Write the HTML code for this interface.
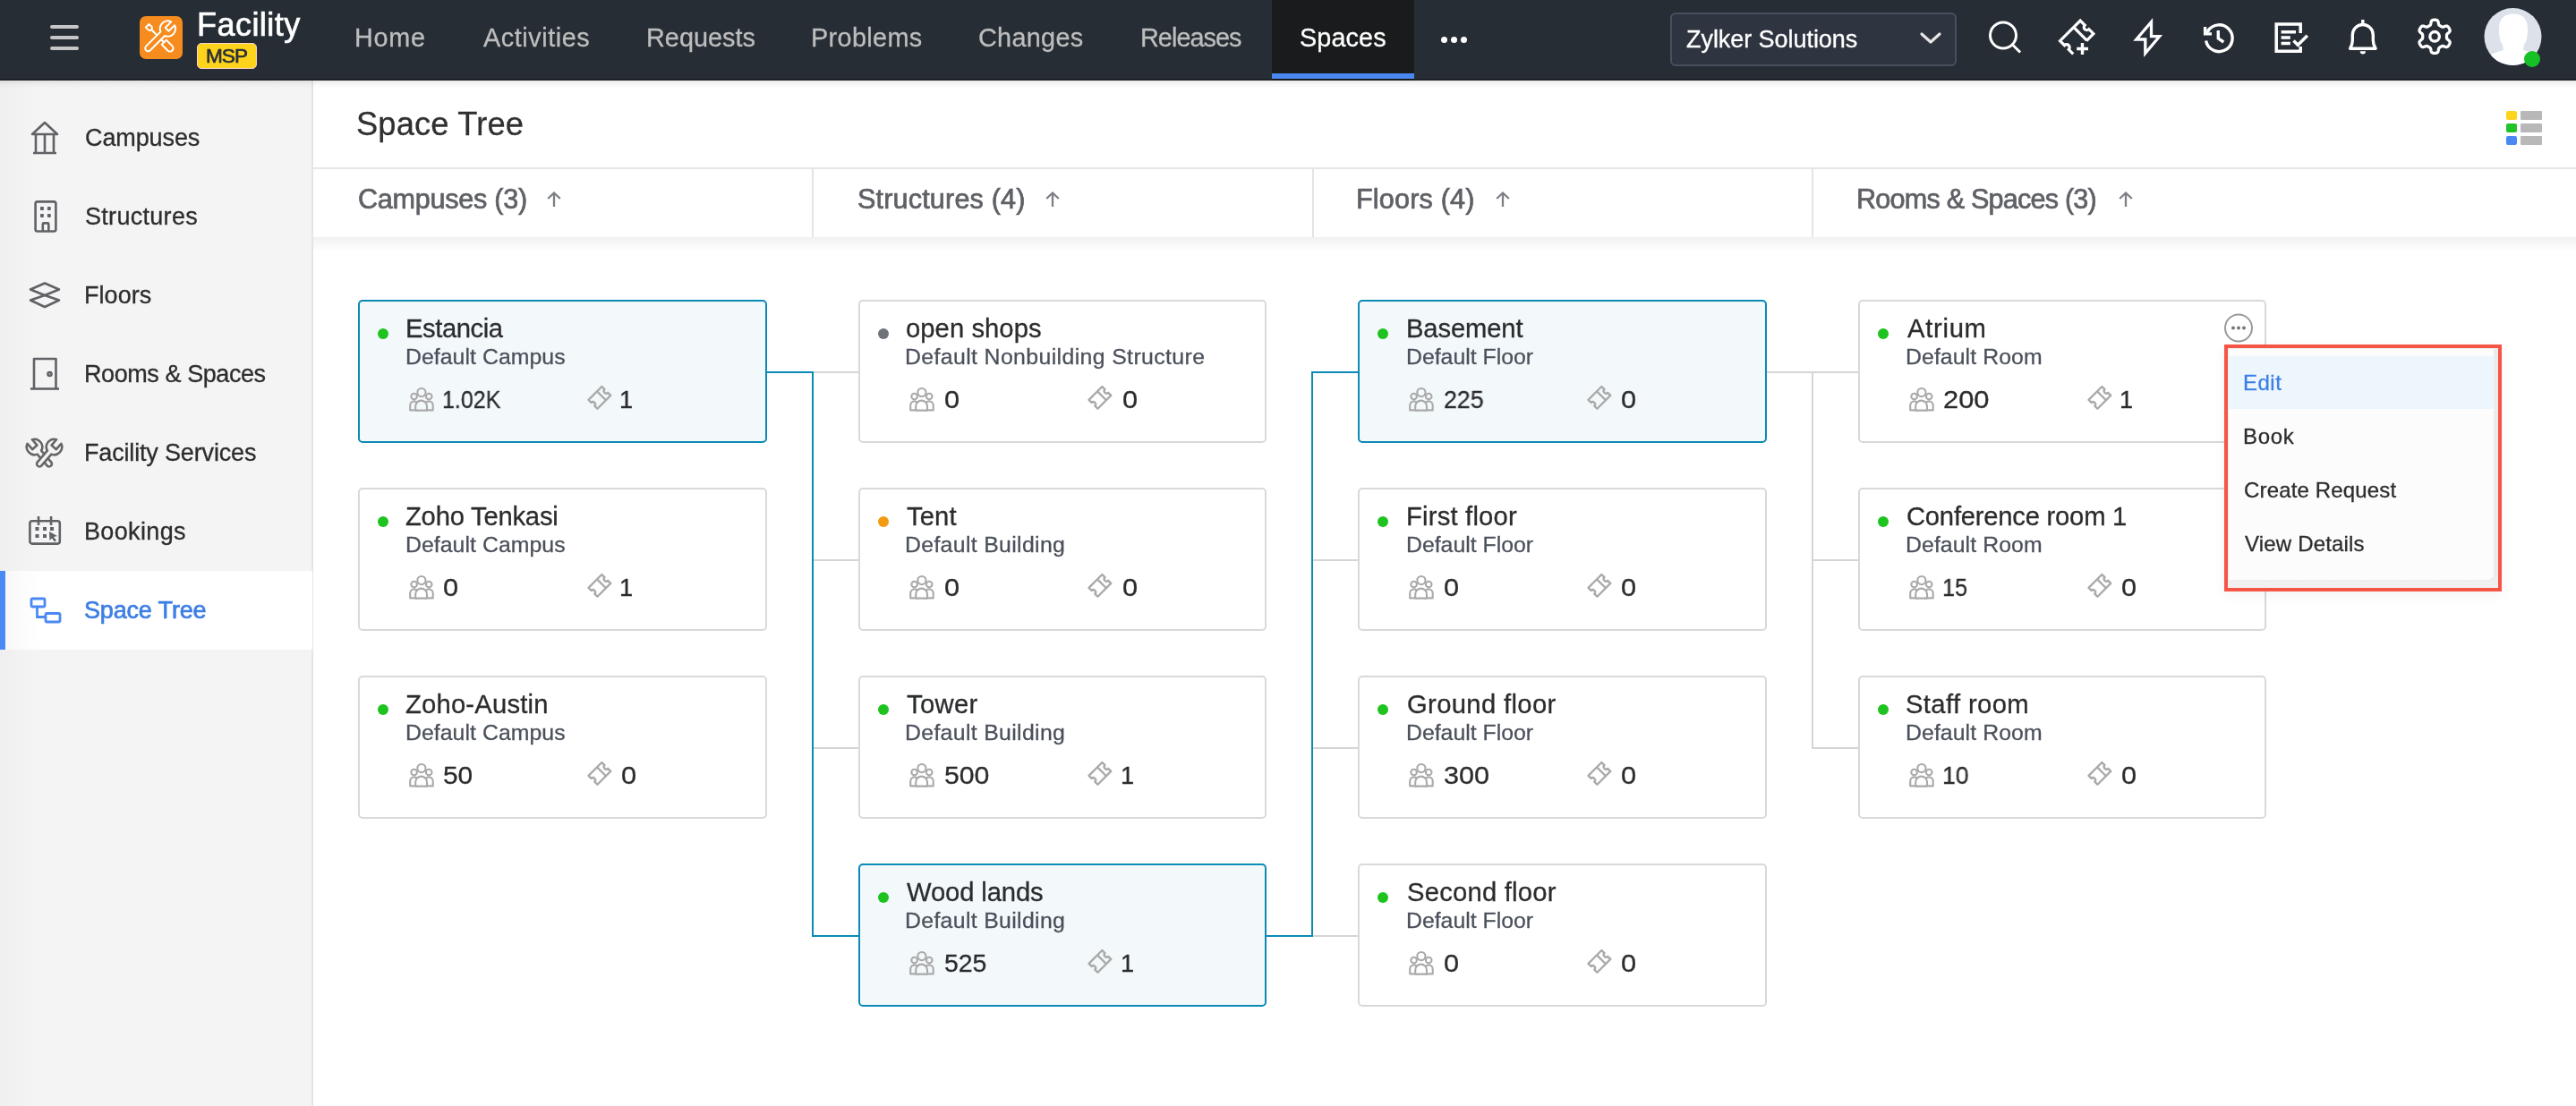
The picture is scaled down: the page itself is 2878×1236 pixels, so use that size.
<!DOCTYPE html>
<html><head><meta charset="utf-8"><style>
html,body{margin:0;padding:0;width:2878px;height:1236px;overflow:hidden;background:#fff;font-family:"Liberation Sans",sans-serif}
.a{position:absolute;display:block}
.t{position:absolute;white-space:nowrap;line-height:1;will-change:transform;-webkit-text-stroke:0.3px currentColor}
</style></head><body>
<div class="a" style="left:0px;top:0px;width:2878px;height:90px;background:#262d35"></div>
<div class="a" style="left:0px;top:88px;width:2878px;height:2px;background:#1e232a"></div>
<div class="a" style="left:56px;top:28px;width:32px;height:4px;background:#c6c6c6;border-radius:2px"></div>
<div class="a" style="left:56px;top:40px;width:32px;height:4px;background:#c6c6c6;border-radius:2px"></div>
<div class="a" style="left:56px;top:52px;width:32px;height:4px;background:#c6c6c6;border-radius:2px"></div>
<svg class="a" style="left:156px;top:18px" width="48" height="48" viewBox="0 0 48 48"><rect x="0" y="0" width="48" height="48" rx="7" fill="#f68b1e"/>
<g transform="translate(21.75 23.75) rotate(-45)" fill="#f68b1e" stroke="#fff" stroke-width="2" stroke-linejoin="round">
<path d="M0 -13 V8" stroke-width="2.2"/>
<path d="M-2.6 -18.5 L2.6 -18.5 L2.6 -14 L1.3 -12.3 L-1.3 -12.3 L-2.6 -14 Z" stroke-width="1.9"/>
<path d="M-3.6 7.8 L3.6 7.8 L3.6 17.2 A3.6 3.6 0 0 1 -3.6 17.2 Z"/>
<path d="M21.82 -2.7 L12.5 -2.7 L12.5 2.7 L21.82 2.7 A8.6 8.6 0 0 1 5.71 3.3 L-17.3 3.3 A3.3 3.3 0 0 1 -17.3 -3.3 L5.71 -3.3 A8.6 8.6 0 0 1 21.82 -2.7 Z"/>
</g></svg>
<div id="t0" class="t" style="left:220.00px;top:10.13px;font-size:36px;color:#ffffff;font-weight:400;letter-spacing:0.462px;-webkit-text-stroke:0.7px #ffffff">Facility</div>
<div class="a" style="left:220px;top:48px;width:67px;height:29px;background:#fdd31b;border-radius:5px;border:1.3px solid #f7d5cb;box-sizing:border-box"></div>
<div id="t1" class="t" style="left:230.00px;top:51.67px;font-size:22.6px;color:#2b2f36;font-weight:400;letter-spacing:-1.000px;-webkit-text-stroke:0.7px #2b2f36">MSP</div>
<div class="a" style="left:1421px;top:0px;width:159px;height:90px;background:#1a1b1c"></div>
<div class="a" style="left:1421px;top:82px;width:159px;height:6px;background:#4a88f0"></div>
<div id="t2" class="t" style="left:396.20px;top:28.22px;font-size:28.8px;color:#bdbdbd;font-weight:400;letter-spacing:0.739px;">Home</div>
<div id="t3" class="t" style="left:540.00px;top:28.22px;font-size:28.8px;color:#bdbdbd;font-weight:400;letter-spacing:0.556px;">Activities</div>
<div id="t4" class="t" style="left:722.00px;top:28.22px;font-size:28.8px;color:#bdbdbd;font-weight:400;letter-spacing:0.034px;">Requests</div>
<div id="t5" class="t" style="left:906.00px;top:28.22px;font-size:28.8px;color:#bdbdbd;font-weight:400;letter-spacing:0.358px;">Problems</div>
<div id="t6" class="t" style="left:1093.40px;top:28.22px;font-size:28.8px;color:#bdbdbd;font-weight:400;letter-spacing:0.319px;">Changes</div>
<div id="t7" class="t" style="left:1274.40px;top:28.22px;font-size:28.8px;color:#bdbdbd;font-weight:400;letter-spacing:-0.933px;">Releases</div>
<div id="t8" class="t" style="left:1452.00px;top:28.22px;font-size:28.8px;color:#ffffff;font-weight:400;letter-spacing:0.100px;">Spaces</div>
<div class="a" style="left:1610.2px;top:41px;width:7px;height:7px;background:#ffffff;border-radius:50%"></div>
<div class="a" style="left:1621.1px;top:41px;width:7px;height:7px;background:#ffffff;border-radius:50%"></div>
<div class="a" style="left:1631.9px;top:41px;width:7px;height:7px;background:#ffffff;border-radius:50%"></div>
<div class="a" style="left:1866px;top:14px;width:320px;height:60px;background:#2e3540;border:2px solid #485060;border-radius:6px;box-sizing:border-box"></div>
<div id="t9" class="t" style="left:1884.00px;top:30.94px;font-size:27px;color:#ffffff;font-weight:400;letter-spacing:-0.054px;">Zylker Solutions</div>
<svg class="a" style="left:2144px;top:35px" width="26" height="16" viewBox="0 0 26 16"><path d="M3 3 L13 12 L23 3" fill="none" stroke="#e6e6e6" stroke-width="3.2" stroke-linecap="round" stroke-linejoin="round"/></svg>
<svg class="a" style="left:2218px;top:18px" width="44" height="46" viewBox="0 0 44 46"><g fill="none" stroke="#ffffff" stroke-width="3" stroke-linecap="square" stroke-linejoin="miter"><circle cx="20" cy="21.5" r="14.5"/><path d="M30.5 32 L38 39.5"/></g></svg>
<svg class="a" style="left:2290px;top:15px" width="60" height="55" viewBox="0 0 60 55"><g fill="none" stroke="#fff" stroke-width="3.2" stroke-linejoin="miter"><g transform="translate(30.2 26.7) rotate(-45)"><path d="M-16 10.4 L-16 3.3 A3.3 3.3 0 0 0 -16 -3.3 L-16 -10.4 L16 -10.4 L16 -3.3 A3.3 3.3 0 0 0 16 3.3 L16 10.4 L5 10.4"/><path d="M5.5 -10.4 V10.4"/></g><path d="M30.2 39.5 H43 M36.5 33 V46" stroke-width="3.4"/></g></svg>
<svg class="a" style="left:2370px;top:15px" width="60" height="55" viewBox="0 0 60 55"><path d="M33.5 9.5 L16.8 29 H26.8 V44.5 L42.6 25.7 H33.5 Z" fill="none" stroke="#fff" stroke-width="3.3" stroke-linejoin="miter" stroke-miterlimit="10"/></svg>
<svg class="a" style="left:2450px;top:15px" width="60" height="55" viewBox="0 0 60 55"><g fill="none" stroke="#fff" stroke-width="3.4"><path d="M14.6 30.5 A14.9 14.9 0 1 0 16.8 19.5"/><path d="M13.6 15 V22.9 H21"/><path d="M13.6 22.9 L18 18.5"/><path d="M28.3 19 V27.8 L34.3 32"/></g></svg>
<svg class="a" style="left:2530px;top:15px" width="60" height="55" viewBox="0 0 60 55"><g fill="none" stroke="#fff" stroke-width="3.5" stroke-linecap="butt"><path d="M40.2 21.9 V12 H13.2 V42.2 H40.2 V37"/><path d="M18.6 20.8 H35 M18.6 27 H28.8 M18.6 33.5 H28.8"/><path d="M32.5 30.5 L37.3 35.3 L47.8 24.8"/></g></svg>
<svg class="a" style="left:2610px;top:15px" width="60" height="55" viewBox="0 0 60 55"><g fill="none" stroke="#fff" stroke-width="3.4" stroke-linejoin="round"><path d="M15.6 39.3 Q18.3 35 18.3 30 V24 A11.5 11.5 0 0 1 41.3 24 V30 Q41.3 35 44.1 39.3 Z"/><path d="M29.8 7 V12.5"/></g><path d="M26.7 42.3 H33 A3.15 3.15 0 0 1 26.7 42.3 Z" fill="#fff"/></svg>
<svg class="a" style="left:2690px;top:15px" width="60" height="55" viewBox="0 0 60 55"><g fill="none" stroke="#fff" stroke-width="3.3" stroke-linejoin="round"><path d="M43.50 25.80 L43.50 26.15 L43.50 26.50 L43.50 26.85 L43.51 27.21 L43.55 27.57 L43.64 27.94 L43.84 28.35 L44.21 28.80 L44.80 29.33 L45.55 29.94 L46.29 30.59 L46.82 31.23 L47.09 31.82 L47.18 32.36 L47.13 32.86 L47.02 33.33 L46.85 33.79 L46.66 34.24 L46.44 34.67 L46.21 35.10 L45.96 35.52 L45.69 35.92 L45.40 36.31 L45.08 36.68 L44.73 37.02 L44.32 37.31 L43.81 37.51 L43.16 37.56 L42.35 37.42 L41.41 37.11 L40.51 36.77 L39.75 36.52 L39.17 36.42 L38.73 36.45 L38.36 36.56 L38.02 36.71 L37.71 36.88 L37.41 37.05 L37.10 37.23 L36.80 37.40 L36.50 37.58 L36.19 37.75 L35.89 37.93 L35.58 38.12 L35.29 38.33 L35.01 38.60 L34.76 38.97 L34.56 39.52 L34.39 40.29 L34.24 41.25 L34.04 42.22 L33.75 42.99 L33.39 43.53 L32.96 43.87 L32.51 44.08 L32.04 44.22 L31.56 44.30 L31.07 44.36 L30.59 44.39 L30.10 44.40 L29.61 44.39 L29.13 44.36 L28.64 44.30 L28.16 44.22 L27.69 44.08 L27.24 43.87 L26.81 43.53 L26.45 42.99 L26.16 42.22 L25.96 41.25 L25.81 40.29 L25.64 39.52 L25.44 38.97 L25.19 38.60 L24.91 38.33 L24.62 38.12 L24.31 37.93 L24.01 37.75 L23.70 37.58 L23.40 37.40 L23.10 37.23 L22.79 37.05 L22.49 36.88 L22.18 36.71 L21.84 36.56 L21.47 36.45 L21.03 36.42 L20.45 36.52 L19.69 36.77 L18.79 37.11 L17.85 37.42 L17.04 37.56 L16.39 37.51 L15.88 37.31 L15.47 37.02 L15.12 36.68 L14.80 36.31 L14.51 35.92 L14.24 35.52 L13.99 35.10 L13.76 34.67 L13.54 34.24 L13.35 33.79 L13.18 33.33 L13.07 32.86 L13.02 32.36 L13.11 31.82 L13.38 31.23 L13.91 30.59 L14.65 29.94 L15.40 29.33 L15.99 28.80 L16.36 28.35 L16.56 27.94 L16.65 27.57 L16.69 27.21 L16.70 26.85 L16.70 26.50 L16.70 26.15 L16.70 25.80 L16.70 25.45 L16.70 25.10 L16.70 24.75 L16.69 24.39 L16.65 24.03 L16.56 23.66 L16.36 23.25 L15.99 22.80 L15.40 22.27 L14.65 21.66 L13.91 21.01 L13.38 20.37 L13.11 19.78 L13.02 19.24 L13.07 18.74 L13.18 18.27 L13.35 17.81 L13.54 17.36 L13.76 16.93 L13.99 16.50 L14.24 16.08 L14.51 15.68 L14.80 15.29 L15.12 14.92 L15.47 14.58 L15.88 14.29 L16.39 14.09 L17.04 14.04 L17.85 14.18 L18.79 14.49 L19.69 14.83 L20.45 15.08 L21.03 15.18 L21.47 15.15 L21.84 15.04 L22.18 14.89 L22.49 14.72 L22.79 14.55 L23.10 14.37 L23.40 14.20 L23.70 14.02 L24.01 13.85 L24.31 13.67 L24.62 13.48 L24.91 13.27 L25.19 13.00 L25.44 12.63 L25.64 12.08 L25.81 11.31 L25.96 10.35 L26.16 9.38 L26.45 8.61 L26.81 8.07 L27.24 7.73 L27.69 7.52 L28.16 7.38 L28.64 7.30 L29.13 7.24 L29.61 7.21 L30.10 7.20 L30.59 7.21 L31.07 7.24 L31.56 7.30 L32.04 7.38 L32.51 7.52 L32.96 7.73 L33.39 8.07 L33.75 8.61 L34.04 9.38 L34.24 10.35 L34.39 11.31 L34.56 12.08 L34.76 12.63 L35.01 13.00 L35.29 13.27 L35.58 13.48 L35.89 13.67 L36.19 13.85 L36.50 14.02 L36.80 14.20 L37.10 14.37 L37.41 14.55 L37.71 14.72 L38.02 14.89 L38.36 15.04 L38.73 15.15 L39.17 15.18 L39.75 15.08 L40.51 14.83 L41.41 14.49 L42.35 14.18 L43.16 14.04 L43.81 14.09 L44.32 14.29 L44.73 14.58 L45.08 14.92 L45.40 15.29 L45.69 15.68 L45.96 16.08 L46.21 16.50 L46.44 16.93 L46.66 17.36 L46.85 17.81 L47.02 18.27 L47.13 18.74 L47.18 19.24 L47.09 19.78 L46.82 20.37 L46.29 21.01 L45.55 21.66 L44.80 22.27 L44.21 22.80 L43.84 23.25 L43.64 23.66 L43.55 24.03 L43.51 24.39 L43.50 24.75 L43.50 25.10 L43.50 25.45Z"/><circle cx="30.1" cy="25.8" r="5.3"/></g></svg>
<svg class="a" style="left:2775px;top:9px" width="66" height="68" viewBox="0 0 66 68"><defs><clipPath id="av"><circle cx="32.5" cy="32" r="32"/></clipPath></defs>
<circle cx="32.5" cy="32" r="32" fill="#dde2ea"/>
<g clip-path="url(#av)" fill="#ffffff"><path d="M17 23 C17 11 24 6.5 33 6.5 C42 6.5 49 11 49 23 C49 31 48 37 45 41 L44 47 C52 49 58 52 64 56 L64 70 L0 70 L0 56 C7 52 14 49 22 47 L21 41 C18 37 17 31 17 23 Z"/></g>
<circle cx="54" cy="57" r="9" fill="#15c125"/></svg>
<div class="a" style="left:0px;top:90px;width:349px;height:1146px;background:linear-gradient(to right,#efefef 0px,#f4f4f4 40px)"></div>
<div class="a" style="left:348px;top:90px;width:2px;height:1146px;background:#e4e4e4"></div>
<div class="a" style="left:0px;top:638px;width:349px;height:88px;background:linear-gradient(to right,#f6f6f6 6px,#fbfbfb 20px,#ffffff 46px)"></div>
<div class="a" style="left:0px;top:638px;width:6px;height:88px;background:#4a89f3"></div>
<div id="t10" class="t" style="left:95.40px;top:140.94px;font-size:27px;color:#2d2d2d;font-weight:400;letter-spacing:-0.109px;">Campuses</div>
<div id="t11" class="t" style="left:95.40px;top:228.94px;font-size:27px;color:#2d2d2d;font-weight:400;letter-spacing:0.298px;">Structures</div>
<div id="t12" class="t" style="left:94.20px;top:316.94px;font-size:27px;color:#2d2d2d;font-weight:400;letter-spacing:0.040px;">Floors</div>
<div id="t13" class="t" style="left:94.40px;top:404.94px;font-size:27px;color:#2d2d2d;font-weight:400;letter-spacing:-0.423px;">Rooms &amp; Spaces</div>
<div id="t14" class="t" style="left:94.40px;top:492.94px;font-size:27px;color:#2d2d2d;font-weight:400;letter-spacing:-0.165px;">Facility Services</div>
<div id="t15" class="t" style="left:94.40px;top:580.94px;font-size:27px;color:#2d2d2d;font-weight:400;letter-spacing:0.352px;">Bookings</div>
<div id="t16" class="t" style="left:94.00px;top:668.94px;font-size:27px;color:#3d7fe5;font-weight:400;letter-spacing:-0.167px;-webkit-text-stroke:0.7px #3d7fe5">Space Tree</div>
<svg class="a" style="left:30px;top:130px" width="40" height="48" viewBox="0 0 40 48"><g fill="none" stroke="#606266" stroke-width="2.6" stroke-linejoin="round"><path d="M6 20 L20 7 L34 20 Z"/><path d="M10 20 V40 M20 20 V40 M30 20 V40 M7 41 H33"/></g></svg>
<svg class="a" style="left:30px;top:218px" width="40" height="48" viewBox="0 0 40 48"><g fill="none" stroke="#606266" stroke-width="2.6" stroke-linejoin="round"><rect x="9.6" y="7.4" width="22.8" height="33.1" rx="2.2"/><path d="M17.8 40.5 V32.4 a1 1 0 0 1 1 -1 h4.5 a1 1 0 0 1 1 1 V40.5"/></g><g fill="#606266"><rect x="15" y="13.1" width="3.9" height="3.9" rx="0.8"/><rect x="22.9" y="13.1" width="3.9" height="3.9" rx="0.8"/><rect x="15" y="21" width="3.9" height="3.9" rx="0.8"/><rect x="22.9" y="21" width="3.9" height="3.9" rx="0.8"/></g></svg>
<svg class="a" style="left:28px;top:306px" width="44" height="44" viewBox="0 0 44 44"><g fill="none" stroke="#606266" stroke-width="2.6" stroke-linejoin="round"><path d="M22 10.5 L38 17.5 L22 24 L6 17.5 Z"/><path d="M22 24 L38 29.5 L22 37 L6 29.5 Z"/></g></svg>
<svg class="a" style="left:30px;top:394px" width="40" height="48" viewBox="0 0 40 48"><g fill="none" stroke="#606266" stroke-width="2.6" stroke-linejoin="round"><path d="M8 40 V7 H32.5 V40"/><path d="M4 40.5 H36"/><circle cx="25.5" cy="24" r="2"/></g></svg>
<svg class="a" style="left:22px;top:482px" width="56" height="48" viewBox="0 0 56 48"><g fill="#f4f4f4" stroke="#666666" stroke-width="2.6" stroke-linejoin="round"><path transform="translate(16.5 17.5) rotate(49)" d="M-7.97 -3.5 L0.5 -3.5 L0.5 3.5 L-7.97 3.5 A8.7 8.7 0 0 0 8.17 3 L25 3 A3 3 0 0 0 25 -3 L8.17 -3 A8.7 8.7 0 0 0 -7.97 -3.5 Z"/><path transform="translate(38.5 17.5) scale(-1 1) rotate(49)" d="M-7.97 -3.5 L0.5 -3.5 L0.5 3.5 L-7.97 3.5 A8.7 8.7 0 0 0 8.17 3 L25 3 A3 3 0 0 0 25 -3 L8.17 -3 A8.7 8.7 0 0 0 -7.97 -3.5 Z"/></g></svg>
<svg class="a" style="left:28px;top:572px" width="44" height="42" viewBox="0 0 44 42"><g fill="none" stroke="#606266" stroke-width="2.6" stroke-linejoin="round"><rect x="5.4" y="10.3" width="33.4" height="25.3" rx="2.5"/><path d="M15.05 5 V14.9 M29.07 5 V14.9"/></g><g fill="#606266"><rect x="11.5" y="17" width="4" height="4"/><rect x="20" y="17" width="4" height="4"/><rect x="28" y="17" width="4" height="4"/><rect x="11.5" y="25" width="4" height="4"/><rect x="20" y="25" width="4" height="4"/><path d="M27 22 L36 27 L32 28 L35 32 L33 33.5 L30 29.5 L27.5 32 Z"/></g></svg>
<svg class="a" style="left:28px;top:662px" width="44" height="40" viewBox="0 0 44 40"><g fill="none" stroke="#4a89f3" stroke-width="2.8"><rect x="7" y="7" width="15" height="9" rx="1.5"/><rect x="23" y="23.5" width="16" height="9.5" rx="1.5"/><path d="M13.5 16 V27.5 H23"/></g></svg>
<div id="t17" class="t" style="left:398.40px;top:120.67px;font-size:36.3px;color:#303030;font-weight:400;letter-spacing:0.150px;">Space Tree</div>
<div class="a" style="left:2800px;top:124px;width:12px;height:10px;background:#fdd31b;border-radius:2px"></div>
<div class="a" style="left:2816px;top:124px;width:24px;height:10px;background:#b8b8b8;border-radius:1px"></div>
<div class="a" style="left:2800px;top:138px;width:12px;height:10px;background:#22c32a;border-radius:2px"></div>
<div class="a" style="left:2816px;top:138px;width:24px;height:10px;background:#b8b8b8;border-radius:1px"></div>
<div class="a" style="left:2800px;top:152px;width:12px;height:10px;background:#4a89f3;border-radius:2px"></div>
<div class="a" style="left:2816px;top:152px;width:24px;height:10px;background:#b8b8b8;border-radius:1px"></div>
<div class="a" style="left:350px;top:187px;width:2528px;height:2px;background:#e6e6e6"></div>
<div class="a" style="left:350px;top:189px;width:2528px;height:76px;background:#ffffff"></div>
<div class="a" style="left:350px;top:265px;width:2528px;height:17px;background:linear-gradient(rgba(0,0,0,0.055),rgba(0,0,0,0.02) 60%,rgba(0,0,0,0))"></div>
<div class="a" style="left:907px;top:189px;width:2px;height:76px;background:#e4e4e4"></div>
<div class="a" style="left:1466px;top:189px;width:2px;height:76px;background:#e4e4e4"></div>
<div class="a" style="left:2024px;top:189px;width:2px;height:76px;background:#e4e4e4"></div>
<div id="t18" class="t" style="left:399.60px;top:207.00px;font-size:30.6px;color:#5f6166;font-weight:400;letter-spacing:-0.271px;-webkit-text-stroke:0.7px #5f6166">Campuses (3)</div>
<svg class="a" style="left:610px;top:212px" width="18" height="21" viewBox="0 0 18 21"><path d="M9 19 V3.5 M2.2 10 L9 3.5 L15.8 10" fill="none" stroke="#7c7f84" stroke-width="2.3"/></svg>
<div id="t19" class="t" style="left:957.60px;top:207.00px;font-size:30.6px;color:#5f6166;font-weight:400;letter-spacing:0.159px;-webkit-text-stroke:0.7px #5f6166">Structures (4)</div>
<svg class="a" style="left:1167px;top:212px" width="18" height="21" viewBox="0 0 18 21"><path d="M9 19 V3.5 M2.2 10 L9 3.5 L15.8 10" fill="none" stroke="#7c7f84" stroke-width="2.3"/></svg>
<div id="t20" class="t" style="left:1515.00px;top:207.00px;font-size:30.6px;color:#5f6166;font-weight:400;letter-spacing:0.168px;-webkit-text-stroke:0.7px #5f6166">Floors (4)</div>
<svg class="a" style="left:1669.5px;top:212px" width="18" height="21" viewBox="0 0 18 21"><path d="M9 19 V3.5 M2.2 10 L9 3.5 L15.8 10" fill="none" stroke="#7c7f84" stroke-width="2.3"/></svg>
<div id="t21" class="t" style="left:2074.00px;top:207.00px;font-size:30.6px;color:#5f6166;font-weight:400;letter-spacing:-0.794px;-webkit-text-stroke:0.7px #5f6166">Rooms &amp; Spaces (3)</div>
<svg class="a" style="left:2365.5px;top:212px" width="18" height="21" viewBox="0 0 18 21"><path d="M9 19 V3.5 M2.2 10 L9 3.5 L15.8 10" fill="none" stroke="#7c7f84" stroke-width="2.3"/></svg>
<div class="a" style="left:857px;top:415px;width:52px;height:2px;background:#0b8ab5"></div>
<div class="a" style="left:907px;top:415px;width:2px;height:632px;background:#0b8ab5"></div>
<div class="a" style="left:909px;top:415px;width:50px;height:2px;background:#d5d5d5"></div>
<div class="a" style="left:909px;top:625px;width:50px;height:2px;background:#d5d5d5"></div>
<div class="a" style="left:909px;top:835px;width:50px;height:2px;background:#d5d5d5"></div>
<div class="a" style="left:908px;top:1045px;width:51px;height:2px;background:#0b8ab5"></div>
<div class="a" style="left:1415px;top:1045px;width:52px;height:2px;background:#0b8ab5"></div>
<div class="a" style="left:1465px;top:415px;width:2px;height:632px;background:#0b8ab5"></div>
<div class="a" style="left:1466px;top:415px;width:51px;height:2px;background:#0b8ab5"></div>
<div class="a" style="left:1467px;top:625px;width:50px;height:2px;background:#d5d5d5"></div>
<div class="a" style="left:1467px;top:835px;width:50px;height:2px;background:#d5d5d5"></div>
<div class="a" style="left:1467px;top:1045px;width:50px;height:2px;background:#d5d5d5"></div>
<div class="a" style="left:1974px;top:415px;width:102px;height:2px;background:#d5d5d5"></div>
<div class="a" style="left:2024px;top:415px;width:2px;height:422px;background:#d5d5d5"></div>
<div class="a" style="left:2026px;top:625px;width:50px;height:2px;background:#d5d5d5"></div>
<div class="a" style="left:2026px;top:835px;width:50px;height:2px;background:#d5d5d5"></div>
<div class="a" style="left:400px;top:335px;width:457px;height:160px;background:#f3f8fb;border:2px solid #0b8ab5;border-radius:5px;box-sizing:border-box"></div>
<div class="a" style="left:422px;top:366.5px;width:12px;height:12px;background:#1ec31f;border-radius:50%"></div>
<div id="t22" class="t" style="left:453.20px;top:353.28px;font-size:29.2px;color:#2b2c2e;font-weight:400;letter-spacing:-0.428px;">Estancia</div>
<div id="t23" class="t" style="left:453.20px;top:386.81px;font-size:24.8px;color:#4b505b;font-weight:400;letter-spacing:0.061px;">Default Campus</div>
<svg class="a" style="left:456px;top:432px" width="30" height="30" viewBox="0 0 30 30"><g stroke="#aaaaaa" stroke-width="2.1" stroke-linejoin="round" fill="#f3f8fb"><path d="M2.2 26.4 V21 A4.6 4.6 0 0 1 11.4 21 V26.4 Z"/><path d="M18.5 26.4 V21 A4.6 4.6 0 0 1 27.7 21 V26.4 Z"/><circle cx="6.6" cy="11" r="3.3"/><circle cx="23.2" cy="11" r="3.3"/><path d="M8.2 26.6 V22 A6.4 6.4 0 0 1 21 22 V26.6 Z"/><circle cx="14.9" cy="6.6" r="4.6"/></g></svg>
<div id="t24" class="t" style="left:494.00px;top:433.18px;font-size:27.2px;color:#2b2c2e;font-weight:400;letter-spacing:0.000px;transform:scaleX(0.9192);transform-origin:0 0;">1.02K</div>
<svg class="a" style="left:655px;top:430px" width="30" height="30" viewBox="0 0 30 30"><g fill="none" stroke="#aaaaaa" stroke-width="2.4" stroke-linejoin="round"><g transform="translate(14.9 14.4) rotate(-45)"><path d="M-10.5 -7 L10.5 -7 L10.5 -2.6 A2.6 2.6 0 0 0 10.5 2.6 L10.5 7 L-10.5 7 L-10.5 2.6 A2.6 2.6 0 0 0 -10.5 -2.6 Z"/><path d="M3 -7 V7"/></g></g></svg>
<div id="t25" class="t" style="left:692.40px;top:433.18px;font-size:27.2px;color:#2b2c2e;font-weight:400;letter-spacing:0.000px;">1</div>
<div class="a" style="left:400px;top:545px;width:457px;height:160px;background:#ffffff;border:2px solid #d9d9d9;border-radius:5px;box-sizing:border-box"></div>
<div class="a" style="left:422px;top:576.5px;width:12px;height:12px;background:#1ec31f;border-radius:50%"></div>
<div id="t26" class="t" style="left:453.40px;top:563.28px;font-size:29.2px;color:#2b2c2e;font-weight:400;letter-spacing:-0.210px;">Zoho Tenkasi</div>
<div id="t27" class="t" style="left:453.20px;top:596.81px;font-size:24.8px;color:#4b505b;font-weight:400;letter-spacing:0.061px;">Default Campus</div>
<svg class="a" style="left:456px;top:642px" width="30" height="30" viewBox="0 0 30 30"><g stroke="#aaaaaa" stroke-width="2.1" stroke-linejoin="round" fill="#ffffff"><path d="M2.2 26.4 V21 A4.6 4.6 0 0 1 11.4 21 V26.4 Z"/><path d="M18.5 26.4 V21 A4.6 4.6 0 0 1 27.7 21 V26.4 Z"/><circle cx="6.6" cy="11" r="3.3"/><circle cx="23.2" cy="11" r="3.3"/><path d="M8.2 26.6 V22 A6.4 6.4 0 0 1 21 22 V26.6 Z"/><circle cx="14.9" cy="6.6" r="4.6"/></g></svg>
<div id="t28" class="t" style="left:495.00px;top:643.18px;font-size:27.2px;color:#2b2c2e;font-weight:400;letter-spacing:0.000px;transform:scaleX(1.1295);transform-origin:0 0;">0</div>
<svg class="a" style="left:655px;top:640px" width="30" height="30" viewBox="0 0 30 30"><g fill="none" stroke="#aaaaaa" stroke-width="2.4" stroke-linejoin="round"><g transform="translate(14.9 14.4) rotate(-45)"><path d="M-10.5 -7 L10.5 -7 L10.5 -2.6 A2.6 2.6 0 0 0 10.5 2.6 L10.5 7 L-10.5 7 L-10.5 2.6 A2.6 2.6 0 0 0 -10.5 -2.6 Z"/><path d="M3 -7 V7"/></g></g></svg>
<div id="t29" class="t" style="left:692.40px;top:643.18px;font-size:27.2px;color:#2b2c2e;font-weight:400;letter-spacing:0.000px;">1</div>
<div class="a" style="left:400px;top:755px;width:457px;height:160px;background:#ffffff;border:2px solid #d9d9d9;border-radius:5px;box-sizing:border-box"></div>
<div class="a" style="left:422px;top:786.5px;width:12px;height:12px;background:#1ec31f;border-radius:50%"></div>
<div id="t30" class="t" style="left:453.40px;top:773.28px;font-size:29.2px;color:#2b2c2e;font-weight:400;letter-spacing:0.210px;">Zoho-Austin</div>
<div id="t31" class="t" style="left:453.20px;top:806.81px;font-size:24.8px;color:#4b505b;font-weight:400;letter-spacing:0.061px;">Default Campus</div>
<svg class="a" style="left:456px;top:852px" width="30" height="30" viewBox="0 0 30 30"><g stroke="#aaaaaa" stroke-width="2.1" stroke-linejoin="round" fill="#ffffff"><path d="M2.2 26.4 V21 A4.6 4.6 0 0 1 11.4 21 V26.4 Z"/><path d="M18.5 26.4 V21 A4.6 4.6 0 0 1 27.7 21 V26.4 Z"/><circle cx="6.6" cy="11" r="3.3"/><circle cx="23.2" cy="11" r="3.3"/><path d="M8.2 26.6 V22 A6.4 6.4 0 0 1 21 22 V26.6 Z"/><circle cx="14.9" cy="6.6" r="4.6"/></g></svg>
<div id="t32" class="t" style="left:495.00px;top:853.18px;font-size:27.2px;color:#2b2c2e;font-weight:400;letter-spacing:0.000px;transform:scaleX(1.0986);transform-origin:0 0;">50</div>
<svg class="a" style="left:655px;top:850px" width="30" height="30" viewBox="0 0 30 30"><g fill="none" stroke="#aaaaaa" stroke-width="2.4" stroke-linejoin="round"><g transform="translate(14.9 14.4) rotate(-45)"><path d="M-10.5 -7 L10.5 -7 L10.5 -2.6 A2.6 2.6 0 0 0 10.5 2.6 L10.5 7 L-10.5 7 L-10.5 2.6 A2.6 2.6 0 0 0 -10.5 -2.6 Z"/><path d="M3 -7 V7"/></g></g></svg>
<div id="t33" class="t" style="left:694.40px;top:853.18px;font-size:27.2px;color:#2b2c2e;font-weight:400;letter-spacing:0.000px;transform:scaleX(1.1295);transform-origin:0 0;">0</div>
<div class="a" style="left:959px;top:335px;width:456px;height:160px;background:#ffffff;border:2px solid #d9d9d9;border-radius:5px;box-sizing:border-box"></div>
<div class="a" style="left:981px;top:366.5px;width:12px;height:12px;background:#6f7278;border-radius:50%"></div>
<div id="t34" class="t" style="left:1012.00px;top:353.28px;font-size:29.2px;color:#2b2c2e;font-weight:400;letter-spacing:0.072px;">open shops</div>
<div id="t35" class="t" style="left:1011.00px;top:386.81px;font-size:24.8px;color:#4b505b;font-weight:400;letter-spacing:0.393px;">Default Nonbuilding Structure</div>
<svg class="a" style="left:1015px;top:432px" width="30" height="30" viewBox="0 0 30 30"><g stroke="#aaaaaa" stroke-width="2.1" stroke-linejoin="round" fill="#ffffff"><path d="M2.2 26.4 V21 A4.6 4.6 0 0 1 11.4 21 V26.4 Z"/><path d="M18.5 26.4 V21 A4.6 4.6 0 0 1 27.7 21 V26.4 Z"/><circle cx="6.6" cy="11" r="3.3"/><circle cx="23.2" cy="11" r="3.3"/><path d="M8.2 26.6 V22 A6.4 6.4 0 0 1 21 22 V26.6 Z"/><circle cx="14.9" cy="6.6" r="4.6"/></g></svg>
<div id="t36" class="t" style="left:1054.80px;top:433.18px;font-size:27.2px;color:#2b2c2e;font-weight:400;letter-spacing:0.000px;transform:scaleX(1.1295);transform-origin:0 0;">0</div>
<svg class="a" style="left:1214px;top:430px" width="30" height="30" viewBox="0 0 30 30"><g fill="none" stroke="#aaaaaa" stroke-width="2.4" stroke-linejoin="round"><g transform="translate(14.9 14.4) rotate(-45)"><path d="M-10.5 -7 L10.5 -7 L10.5 -2.6 A2.6 2.6 0 0 0 10.5 2.6 L10.5 7 L-10.5 7 L-10.5 2.6 A2.6 2.6 0 0 0 -10.5 -2.6 Z"/><path d="M3 -7 V7"/></g></g></svg>
<div id="t37" class="t" style="left:1253.60px;top:433.18px;font-size:27.2px;color:#2b2c2e;font-weight:400;letter-spacing:0.000px;transform:scaleX(1.1295);transform-origin:0 0;">0</div>
<div class="a" style="left:959px;top:545px;width:456px;height:160px;background:#ffffff;border:2px solid #d9d9d9;border-radius:5px;box-sizing:border-box"></div>
<div class="a" style="left:981px;top:576.5px;width:12px;height:12px;background:#f39a12;border-radius:50%"></div>
<div id="t38" class="t" style="left:1013.00px;top:563.28px;font-size:29.2px;color:#2b2c2e;font-weight:400;letter-spacing:0.137px;">Tent</div>
<div id="t39" class="t" style="left:1011.00px;top:596.81px;font-size:24.8px;color:#4b505b;font-weight:400;letter-spacing:0.342px;">Default Building</div>
<svg class="a" style="left:1015px;top:642px" width="30" height="30" viewBox="0 0 30 30"><g stroke="#aaaaaa" stroke-width="2.1" stroke-linejoin="round" fill="#ffffff"><path d="M2.2 26.4 V21 A4.6 4.6 0 0 1 11.4 21 V26.4 Z"/><path d="M18.5 26.4 V21 A4.6 4.6 0 0 1 27.7 21 V26.4 Z"/><circle cx="6.6" cy="11" r="3.3"/><circle cx="23.2" cy="11" r="3.3"/><path d="M8.2 26.6 V22 A6.4 6.4 0 0 1 21 22 V26.6 Z"/><circle cx="14.9" cy="6.6" r="4.6"/></g></svg>
<div id="t40" class="t" style="left:1054.80px;top:643.18px;font-size:27.2px;color:#2b2c2e;font-weight:400;letter-spacing:0.000px;transform:scaleX(1.1295);transform-origin:0 0;">0</div>
<svg class="a" style="left:1214px;top:640px" width="30" height="30" viewBox="0 0 30 30"><g fill="none" stroke="#aaaaaa" stroke-width="2.4" stroke-linejoin="round"><g transform="translate(14.9 14.4) rotate(-45)"><path d="M-10.5 -7 L10.5 -7 L10.5 -2.6 A2.6 2.6 0 0 0 10.5 2.6 L10.5 7 L-10.5 7 L-10.5 2.6 A2.6 2.6 0 0 0 -10.5 -2.6 Z"/><path d="M3 -7 V7"/></g></g></svg>
<div id="t41" class="t" style="left:1253.60px;top:643.18px;font-size:27.2px;color:#2b2c2e;font-weight:400;letter-spacing:0.000px;transform:scaleX(1.1295);transform-origin:0 0;">0</div>
<div class="a" style="left:959px;top:755px;width:456px;height:160px;background:#ffffff;border:2px solid #d9d9d9;border-radius:5px;box-sizing:border-box"></div>
<div class="a" style="left:981px;top:786.5px;width:12px;height:12px;background:#1ec31f;border-radius:50%"></div>
<div id="t42" class="t" style="left:1013.00px;top:773.28px;font-size:29.2px;color:#2b2c2e;font-weight:400;letter-spacing:0.350px;">Tower</div>
<div id="t43" class="t" style="left:1011.00px;top:806.81px;font-size:24.8px;color:#4b505b;font-weight:400;letter-spacing:0.342px;">Default Building</div>
<svg class="a" style="left:1015px;top:852px" width="30" height="30" viewBox="0 0 30 30"><g stroke="#aaaaaa" stroke-width="2.1" stroke-linejoin="round" fill="#ffffff"><path d="M2.2 26.4 V21 A4.6 4.6 0 0 1 11.4 21 V26.4 Z"/><path d="M18.5 26.4 V21 A4.6 4.6 0 0 1 27.7 21 V26.4 Z"/><circle cx="6.6" cy="11" r="3.3"/><circle cx="23.2" cy="11" r="3.3"/><path d="M8.2 26.6 V22 A6.4 6.4 0 0 1 21 22 V26.6 Z"/><circle cx="14.9" cy="6.6" r="4.6"/></g></svg>
<div id="t44" class="t" style="left:1054.80px;top:853.18px;font-size:27.2px;color:#2b2c2e;font-weight:400;letter-spacing:0.000px;transform:scaleX(1.1117);transform-origin:0 0;">500</div>
<svg class="a" style="left:1214px;top:850px" width="30" height="30" viewBox="0 0 30 30"><g fill="none" stroke="#aaaaaa" stroke-width="2.4" stroke-linejoin="round"><g transform="translate(14.9 14.4) rotate(-45)"><path d="M-10.5 -7 L10.5 -7 L10.5 -2.6 A2.6 2.6 0 0 0 10.5 2.6 L10.5 7 L-10.5 7 L-10.5 2.6 A2.6 2.6 0 0 0 -10.5 -2.6 Z"/><path d="M3 -7 V7"/></g></g></svg>
<div id="t45" class="t" style="left:1251.60px;top:853.18px;font-size:27.2px;color:#2b2c2e;font-weight:400;letter-spacing:0.000px;">1</div>
<div class="a" style="left:959px;top:965px;width:456px;height:160px;background:#f3f8fb;border:2px solid #0b8ab5;border-radius:5px;box-sizing:border-box"></div>
<div class="a" style="left:981px;top:996.5px;width:12px;height:12px;background:#1ec31f;border-radius:50%"></div>
<div id="t46" class="t" style="left:1013.00px;top:983.28px;font-size:29.2px;color:#2b2c2e;font-weight:400;letter-spacing:-0.111px;">Wood lands</div>
<div id="t47" class="t" style="left:1011.00px;top:1016.81px;font-size:24.8px;color:#4b505b;font-weight:400;letter-spacing:0.342px;">Default Building</div>
<svg class="a" style="left:1015px;top:1062px" width="30" height="30" viewBox="0 0 30 30"><g stroke="#aaaaaa" stroke-width="2.1" stroke-linejoin="round" fill="#f3f8fb"><path d="M2.2 26.4 V21 A4.6 4.6 0 0 1 11.4 21 V26.4 Z"/><path d="M18.5 26.4 V21 A4.6 4.6 0 0 1 27.7 21 V26.4 Z"/><circle cx="6.6" cy="11" r="3.3"/><circle cx="23.2" cy="11" r="3.3"/><path d="M8.2 26.6 V22 A6.4 6.4 0 0 1 21 22 V26.6 Z"/><circle cx="14.9" cy="6.6" r="4.6"/></g></svg>
<div id="t48" class="t" style="left:1054.80px;top:1063.18px;font-size:27.2px;color:#2b2c2e;font-weight:400;letter-spacing:0.000px;transform:scaleX(1.0456);transform-origin:0 0;">525</div>
<svg class="a" style="left:1214px;top:1060px" width="30" height="30" viewBox="0 0 30 30"><g fill="none" stroke="#aaaaaa" stroke-width="2.4" stroke-linejoin="round"><g transform="translate(14.9 14.4) rotate(-45)"><path d="M-10.5 -7 L10.5 -7 L10.5 -2.6 A2.6 2.6 0 0 0 10.5 2.6 L10.5 7 L-10.5 7 L-10.5 2.6 A2.6 2.6 0 0 0 -10.5 -2.6 Z"/><path d="M3 -7 V7"/></g></g></svg>
<div id="t49" class="t" style="left:1251.60px;top:1063.18px;font-size:27.2px;color:#2b2c2e;font-weight:400;letter-spacing:0.000px;">1</div>
<div class="a" style="left:1517px;top:335px;width:457px;height:160px;background:#f3f8fb;border:2px solid #0b8ab5;border-radius:5px;box-sizing:border-box"></div>
<div class="a" style="left:1539px;top:366.5px;width:12px;height:12px;background:#1ec31f;border-radius:50%"></div>
<div id="t50" class="t" style="left:1570.60px;top:353.28px;font-size:29.2px;color:#2b2c2e;font-weight:400;letter-spacing:-0.126px;">Basement</div>
<div id="t51" class="t" style="left:1570.60px;top:386.81px;font-size:24.8px;color:#4b505b;font-weight:400;letter-spacing:0.011px;">Default Floor</div>
<svg class="a" style="left:1573px;top:432px" width="30" height="30" viewBox="0 0 30 30"><g stroke="#aaaaaa" stroke-width="2.1" stroke-linejoin="round" fill="#f3f8fb"><path d="M2.2 26.4 V21 A4.6 4.6 0 0 1 11.4 21 V26.4 Z"/><path d="M18.5 26.4 V21 A4.6 4.6 0 0 1 27.7 21 V26.4 Z"/><circle cx="6.6" cy="11" r="3.3"/><circle cx="23.2" cy="11" r="3.3"/><path d="M8.2 26.6 V22 A6.4 6.4 0 0 1 21 22 V26.6 Z"/><circle cx="14.9" cy="6.6" r="4.6"/></g></svg>
<div id="t52" class="t" style="left:1612.60px;top:433.18px;font-size:27.2px;color:#2b2c2e;font-weight:400;letter-spacing:0.000px;transform:scaleX(0.9836);transform-origin:0 0;">225</div>
<svg class="a" style="left:1772px;top:430px" width="30" height="30" viewBox="0 0 30 30"><g fill="none" stroke="#aaaaaa" stroke-width="2.4" stroke-linejoin="round"><g transform="translate(14.9 14.4) rotate(-45)"><path d="M-10.5 -7 L10.5 -7 L10.5 -2.6 A2.6 2.6 0 0 0 10.5 2.6 L10.5 7 L-10.5 7 L-10.5 2.6 A2.6 2.6 0 0 0 -10.5 -2.6 Z"/><path d="M3 -7 V7"/></g></g></svg>
<div id="t53" class="t" style="left:1811.40px;top:433.18px;font-size:27.2px;color:#2b2c2e;font-weight:400;letter-spacing:0.000px;transform:scaleX(1.1295);transform-origin:0 0;">0</div>
<div class="a" style="left:1517px;top:545px;width:457px;height:160px;background:#ffffff;border:2px solid #d9d9d9;border-radius:5px;box-sizing:border-box"></div>
<div class="a" style="left:1539px;top:576.5px;width:12px;height:12px;background:#1ec31f;border-radius:50%"></div>
<div id="t54" class="t" style="left:1570.60px;top:563.28px;font-size:29.2px;color:#2b2c2e;font-weight:400;letter-spacing:0.210px;">First floor</div>
<div id="t55" class="t" style="left:1570.60px;top:596.81px;font-size:24.8px;color:#4b505b;font-weight:400;letter-spacing:0.011px;">Default Floor</div>
<svg class="a" style="left:1573px;top:642px" width="30" height="30" viewBox="0 0 30 30"><g stroke="#aaaaaa" stroke-width="2.1" stroke-linejoin="round" fill="#ffffff"><path d="M2.2 26.4 V21 A4.6 4.6 0 0 1 11.4 21 V26.4 Z"/><path d="M18.5 26.4 V21 A4.6 4.6 0 0 1 27.7 21 V26.4 Z"/><circle cx="6.6" cy="11" r="3.3"/><circle cx="23.2" cy="11" r="3.3"/><path d="M8.2 26.6 V22 A6.4 6.4 0 0 1 21 22 V26.6 Z"/><circle cx="14.9" cy="6.6" r="4.6"/></g></svg>
<div id="t56" class="t" style="left:1612.60px;top:643.18px;font-size:27.2px;color:#2b2c2e;font-weight:400;letter-spacing:0.000px;transform:scaleX(1.1295);transform-origin:0 0;">0</div>
<svg class="a" style="left:1772px;top:640px" width="30" height="30" viewBox="0 0 30 30"><g fill="none" stroke="#aaaaaa" stroke-width="2.4" stroke-linejoin="round"><g transform="translate(14.9 14.4) rotate(-45)"><path d="M-10.5 -7 L10.5 -7 L10.5 -2.6 A2.6 2.6 0 0 0 10.5 2.6 L10.5 7 L-10.5 7 L-10.5 2.6 A2.6 2.6 0 0 0 -10.5 -2.6 Z"/><path d="M3 -7 V7"/></g></g></svg>
<div id="t57" class="t" style="left:1811.40px;top:643.18px;font-size:27.2px;color:#2b2c2e;font-weight:400;letter-spacing:0.000px;transform:scaleX(1.1295);transform-origin:0 0;">0</div>
<div class="a" style="left:1517px;top:755px;width:457px;height:160px;background:#ffffff;border:2px solid #d9d9d9;border-radius:5px;box-sizing:border-box"></div>
<div class="a" style="left:1539px;top:786.5px;width:12px;height:12px;background:#1ec31f;border-radius:50%"></div>
<div id="t58" class="t" style="left:1571.60px;top:773.28px;font-size:29.2px;color:#2b2c2e;font-weight:400;letter-spacing:0.362px;">Ground floor</div>
<div id="t59" class="t" style="left:1570.60px;top:806.81px;font-size:24.8px;color:#4b505b;font-weight:400;letter-spacing:0.011px;">Default Floor</div>
<svg class="a" style="left:1573px;top:852px" width="30" height="30" viewBox="0 0 30 30"><g stroke="#aaaaaa" stroke-width="2.1" stroke-linejoin="round" fill="#ffffff"><path d="M2.2 26.4 V21 A4.6 4.6 0 0 1 11.4 21 V26.4 Z"/><path d="M18.5 26.4 V21 A4.6 4.6 0 0 1 27.7 21 V26.4 Z"/><circle cx="6.6" cy="11" r="3.3"/><circle cx="23.2" cy="11" r="3.3"/><path d="M8.2 26.6 V22 A6.4 6.4 0 0 1 21 22 V26.6 Z"/><circle cx="14.9" cy="6.6" r="4.6"/></g></svg>
<div id="t60" class="t" style="left:1612.60px;top:853.18px;font-size:27.2px;color:#2b2c2e;font-weight:400;letter-spacing:0.000px;transform:scaleX(1.1245);transform-origin:0 0;">300</div>
<svg class="a" style="left:1772px;top:850px" width="30" height="30" viewBox="0 0 30 30"><g fill="none" stroke="#aaaaaa" stroke-width="2.4" stroke-linejoin="round"><g transform="translate(14.9 14.4) rotate(-45)"><path d="M-10.5 -7 L10.5 -7 L10.5 -2.6 A2.6 2.6 0 0 0 10.5 2.6 L10.5 7 L-10.5 7 L-10.5 2.6 A2.6 2.6 0 0 0 -10.5 -2.6 Z"/><path d="M3 -7 V7"/></g></g></svg>
<div id="t61" class="t" style="left:1811.40px;top:853.18px;font-size:27.2px;color:#2b2c2e;font-weight:400;letter-spacing:0.000px;transform:scaleX(1.1295);transform-origin:0 0;">0</div>
<div class="a" style="left:1517px;top:965px;width:457px;height:160px;background:#ffffff;border:2px solid #d9d9d9;border-radius:5px;box-sizing:border-box"></div>
<div class="a" style="left:1539px;top:996.5px;width:12px;height:12px;background:#1ec31f;border-radius:50%"></div>
<div id="t62" class="t" style="left:1571.60px;top:983.28px;font-size:29.2px;color:#2b2c2e;font-weight:400;letter-spacing:0.229px;">Second floor</div>
<div id="t63" class="t" style="left:1570.60px;top:1016.81px;font-size:24.8px;color:#4b505b;font-weight:400;letter-spacing:0.011px;">Default Floor</div>
<svg class="a" style="left:1573px;top:1062px" width="30" height="30" viewBox="0 0 30 30"><g stroke="#aaaaaa" stroke-width="2.1" stroke-linejoin="round" fill="#ffffff"><path d="M2.2 26.4 V21 A4.6 4.6 0 0 1 11.4 21 V26.4 Z"/><path d="M18.5 26.4 V21 A4.6 4.6 0 0 1 27.7 21 V26.4 Z"/><circle cx="6.6" cy="11" r="3.3"/><circle cx="23.2" cy="11" r="3.3"/><path d="M8.2 26.6 V22 A6.4 6.4 0 0 1 21 22 V26.6 Z"/><circle cx="14.9" cy="6.6" r="4.6"/></g></svg>
<div id="t64" class="t" style="left:1612.60px;top:1063.18px;font-size:27.2px;color:#2b2c2e;font-weight:400;letter-spacing:0.000px;transform:scaleX(1.1295);transform-origin:0 0;">0</div>
<svg class="a" style="left:1772px;top:1060px" width="30" height="30" viewBox="0 0 30 30"><g fill="none" stroke="#aaaaaa" stroke-width="2.4" stroke-linejoin="round"><g transform="translate(14.9 14.4) rotate(-45)"><path d="M-10.5 -7 L10.5 -7 L10.5 -2.6 A2.6 2.6 0 0 0 10.5 2.6 L10.5 7 L-10.5 7 L-10.5 2.6 A2.6 2.6 0 0 0 -10.5 -2.6 Z"/><path d="M3 -7 V7"/></g></g></svg>
<div id="t65" class="t" style="left:1811.40px;top:1063.18px;font-size:27.2px;color:#2b2c2e;font-weight:400;letter-spacing:0.000px;transform:scaleX(1.1295);transform-origin:0 0;">0</div>
<div class="a" style="left:2076px;top:335px;width:456px;height:160px;background:#ffffff;border:2px solid #d9d9d9;border-radius:5px;box-sizing:border-box"></div>
<div class="a" style="left:2098px;top:366.5px;width:12px;height:12px;background:#1ec31f;border-radius:50%"></div>
<div id="t66" class="t" style="left:2130.60px;top:353.28px;font-size:29.2px;color:#2b2c2e;font-weight:400;letter-spacing:0.720px;">Atrium</div>
<div id="t67" class="t" style="left:2128.60px;top:386.81px;font-size:24.8px;color:#4b505b;font-weight:400;letter-spacing:0.090px;">Default Room</div>
<svg class="a" style="left:2132px;top:432px" width="30" height="30" viewBox="0 0 30 30"><g stroke="#aaaaaa" stroke-width="2.1" stroke-linejoin="round" fill="#ffffff"><path d="M2.2 26.4 V21 A4.6 4.6 0 0 1 11.4 21 V26.4 Z"/><path d="M18.5 26.4 V21 A4.6 4.6 0 0 1 27.7 21 V26.4 Z"/><circle cx="6.6" cy="11" r="3.3"/><circle cx="23.2" cy="11" r="3.3"/><path d="M8.2 26.6 V22 A6.4 6.4 0 0 1 21 22 V26.6 Z"/><circle cx="14.9" cy="6.6" r="4.6"/></g></svg>
<div id="t68" class="t" style="left:2170.80px;top:433.18px;font-size:27.2px;color:#2b2c2e;font-weight:400;letter-spacing:0.000px;transform:scaleX(1.1338);transform-origin:0 0;">200</div>
<svg class="a" style="left:2331px;top:430px" width="30" height="30" viewBox="0 0 30 30"><g fill="none" stroke="#aaaaaa" stroke-width="2.4" stroke-linejoin="round"><g transform="translate(14.9 14.4) rotate(-45)"><path d="M-10.5 -7 L10.5 -7 L10.5 -2.6 A2.6 2.6 0 0 0 10.5 2.6 L10.5 7 L-10.5 7 L-10.5 2.6 A2.6 2.6 0 0 0 -10.5 -2.6 Z"/><path d="M3 -7 V7"/></g></g></svg>
<div id="t69" class="t" style="left:2368.00px;top:433.18px;font-size:27.2px;color:#2b2c2e;font-weight:400;letter-spacing:0.000px;">1</div>
<div class="a" style="left:2076px;top:545px;width:456px;height:160px;background:#ffffff;border:2px solid #d9d9d9;border-radius:5px;box-sizing:border-box"></div>
<div class="a" style="left:2098px;top:576.5px;width:12px;height:12px;background:#1ec31f;border-radius:50%"></div>
<div id="t70" class="t" style="left:2129.60px;top:563.28px;font-size:29.2px;color:#2b2c2e;font-weight:400;letter-spacing:-0.219px;">Conference room 1</div>
<div id="t71" class="t" style="left:2128.60px;top:596.81px;font-size:24.8px;color:#4b505b;font-weight:400;letter-spacing:0.090px;">Default Room</div>
<svg class="a" style="left:2132px;top:642px" width="30" height="30" viewBox="0 0 30 30"><g stroke="#aaaaaa" stroke-width="2.1" stroke-linejoin="round" fill="#ffffff"><path d="M2.2 26.4 V21 A4.6 4.6 0 0 1 11.4 21 V26.4 Z"/><path d="M18.5 26.4 V21 A4.6 4.6 0 0 1 27.7 21 V26.4 Z"/><circle cx="6.6" cy="11" r="3.3"/><circle cx="23.2" cy="11" r="3.3"/><path d="M8.2 26.6 V22 A6.4 6.4 0 0 1 21 22 V26.6 Z"/><circle cx="14.9" cy="6.6" r="4.6"/></g></svg>
<div id="t72" class="t" style="left:2169.80px;top:643.18px;font-size:27.2px;color:#2b2c2e;font-weight:400;letter-spacing:0.000px;transform:scaleX(0.9335);transform-origin:0 0;">15</div>
<svg class="a" style="left:2331px;top:640px" width="30" height="30" viewBox="0 0 30 30"><g fill="none" stroke="#aaaaaa" stroke-width="2.4" stroke-linejoin="round"><g transform="translate(14.9 14.4) rotate(-45)"><path d="M-10.5 -7 L10.5 -7 L10.5 -2.6 A2.6 2.6 0 0 0 10.5 2.6 L10.5 7 L-10.5 7 L-10.5 2.6 A2.6 2.6 0 0 0 -10.5 -2.6 Z"/><path d="M3 -7 V7"/></g></g></svg>
<div id="t73" class="t" style="left:2370.00px;top:643.18px;font-size:27.2px;color:#2b2c2e;font-weight:400;letter-spacing:0.000px;transform:scaleX(1.1295);transform-origin:0 0;">0</div>
<div class="a" style="left:2076px;top:755px;width:456px;height:160px;background:#ffffff;border:2px solid #d9d9d9;border-radius:5px;box-sizing:border-box"></div>
<div class="a" style="left:2098px;top:786.5px;width:12px;height:12px;background:#1ec31f;border-radius:50%"></div>
<div id="t74" class="t" style="left:2129.20px;top:773.28px;font-size:29.2px;color:#2b2c2e;font-weight:400;letter-spacing:0.389px;">Staff room</div>
<div id="t75" class="t" style="left:2128.60px;top:806.81px;font-size:24.8px;color:#4b505b;font-weight:400;letter-spacing:0.090px;">Default Room</div>
<svg class="a" style="left:2132px;top:852px" width="30" height="30" viewBox="0 0 30 30"><g stroke="#aaaaaa" stroke-width="2.1" stroke-linejoin="round" fill="#ffffff"><path d="M2.2 26.4 V21 A4.6 4.6 0 0 1 11.4 21 V26.4 Z"/><path d="M18.5 26.4 V21 A4.6 4.6 0 0 1 27.7 21 V26.4 Z"/><circle cx="6.6" cy="11" r="3.3"/><circle cx="23.2" cy="11" r="3.3"/><path d="M8.2 26.6 V22 A6.4 6.4 0 0 1 21 22 V26.6 Z"/><circle cx="14.9" cy="6.6" r="4.6"/></g></svg>
<div id="t76" class="t" style="left:2169.80px;top:853.18px;font-size:27.2px;color:#2b2c2e;font-weight:400;letter-spacing:0.000px;transform:scaleX(0.9814);transform-origin:0 0;">10</div>
<svg class="a" style="left:2331px;top:850px" width="30" height="30" viewBox="0 0 30 30"><g fill="none" stroke="#aaaaaa" stroke-width="2.4" stroke-linejoin="round"><g transform="translate(14.9 14.4) rotate(-45)"><path d="M-10.5 -7 L10.5 -7 L10.5 -2.6 A2.6 2.6 0 0 0 10.5 2.6 L10.5 7 L-10.5 7 L-10.5 2.6 A2.6 2.6 0 0 0 -10.5 -2.6 Z"/><path d="M3 -7 V7"/></g></g></svg>
<div id="t77" class="t" style="left:2370.00px;top:853.18px;font-size:27.2px;color:#2b2c2e;font-weight:400;letter-spacing:0.000px;transform:scaleX(1.1295);transform-origin:0 0;">0</div>
<svg class="a" style="left:2484px;top:350px" width="34" height="34" viewBox="0 0 34 34"><circle cx="17" cy="16.5" r="15" fill="#ffffff" stroke="#9a9a9a" stroke-width="2"/><g fill="#777"><circle cx="11" cy="16.5" r="2"/><circle cx="17" cy="16.5" r="2"/><circle cx="23" cy="16.5" r="2"/></g></svg>
<div class="a" style="left:2485px;top:385px;width:310px;height:276px;box-shadow:0 4px 14px rgba(0,0,0,0.05)"></div>
<div class="a" style="left:2489px;top:389px;width:302px;height:268px;background:linear-gradient(to bottom,#ececec 0%,#ececec 94%,#f2f2f2 100%)"></div>
<div class="a" style="left:2490px;top:390px;width:296px;height:258px;background:#fcfcfc;border-radius:0 0 7px 0"></div>
<div class="a" style="left:2490px;top:398px;width:296px;height:59px;background:#eef6fd"></div>
<div id="t78" class="t" style="left:2506.00px;top:415.98px;font-size:24px;color:#3d7fe5;font-weight:400;letter-spacing:0.499px;">Edit</div>
<div id="t79" class="t" style="left:2506.00px;top:476.28px;font-size:24px;color:#2d2d2d;font-weight:400;letter-spacing:0.703px;">Book</div>
<div id="t80" class="t" style="left:2507.20px;top:536.08px;font-size:24px;color:#2d2d2d;font-weight:400;letter-spacing:0.159px;">Create Request</div>
<div id="t81" class="t" style="left:2508.00px;top:596.08px;font-size:24px;color:#2d2d2d;font-weight:400;letter-spacing:0.181px;">View Details</div>
<div class="a" style="left:2485px;top:385px;width:310px;height:276px;border:4.6px solid #f65546;box-sizing:border-box"></div>
<div class="a" style="left:0px;top:90px;width:2878px;height:9px;background:linear-gradient(rgba(0,0,0,0.085),rgba(0,0,0,0.03) 45%,rgba(0,0,0,0))"></div>
</body></html>
